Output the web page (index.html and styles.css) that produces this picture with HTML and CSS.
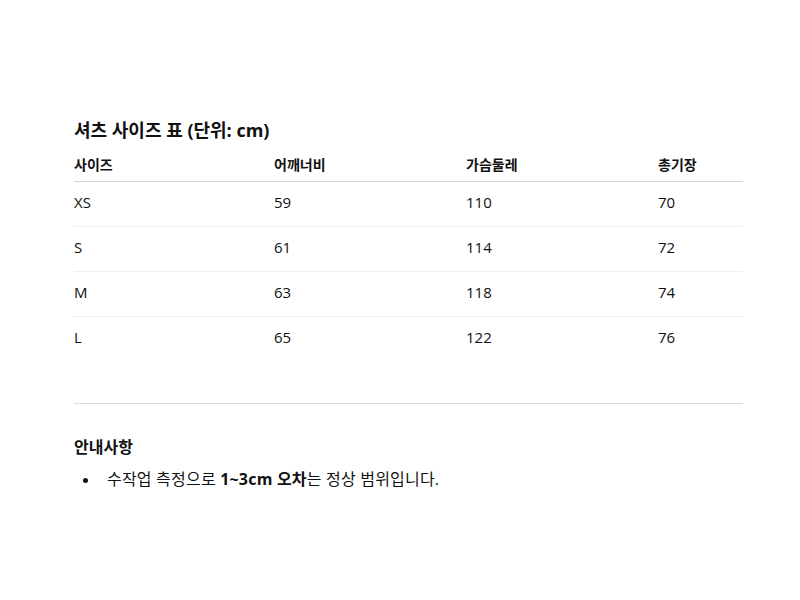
FILE: index.html
```html
<!DOCTYPE html>
<html lang="ko">
<head>
<meta charset="utf-8">
<link rel="stylesheet" href="styles.css">
</head>
<body>
<main class="page">
  <h2 class="title">셔츠 사이즈 표 (단위: cm)</h2>
  <table class="size-table">
    <thead>
      <tr><th class="c1">사이즈</th><th class="c2">어깨너비</th><th class="c3">가슴둘레</th><th class="c4">총기장</th></tr>
    </thead>
    <tbody>
      <tr><td>XS</td><td>59</td><td>110</td><td>70</td></tr>
      <tr><td>S</td><td>61</td><td>114</td><td>72</td></tr>
      <tr><td>M</td><td>63</td><td>118</td><td>74</td></tr>
      <tr><td>L</td><td>65</td><td>122</td><td>76</td></tr>
    </tbody>
  </table>
  <hr class="divider">
  <section class="notice">
    <h3 class="notice-title">안내사항</h3>
    <ul class="notice-list">
      <li><span class="bullet"></span><span class="text">수작업 측정으로 <strong>1~3cm 오차</strong>는 정상 범위입니다.</span></li>
    </ul>
  </section>
</main>
</body>
</html>
```

FILE: styles.css
```css
* { box-sizing: border-box; }
html, body { margin: 0; padding: 0; background: #fff; }
body {
  font-family: "Open Sans", "Noto Sans CJK KR", sans-serif;
  color: #111;
}
.page {
  width: 669px;
  margin-left: 74px;
  padding-top: 116px;
}
.title {
  margin: 0 0 7px 0;
  font-size: 18px;
  line-height: 28px;
  font-weight: 700;
}
.size-table {
  width: 100%;
  border-collapse: collapse;
  font-size: 15px;
}
.size-table th {
  text-align: left;
  font-size: 14px;
  font-weight: 700;
  line-height: 20px;
  padding: 4px 0 6px 0;
  border-bottom: 1px solid #d6d6d6;
}
.size-table td {
  line-height: 20px;
  padding: 10px 0 14px 0;
  border-bottom: 1px solid #efefef;
}
.size-table tbody tr:last-child td { border-bottom: none; }
.c1 { width: 200px; }
.c2 { width: 192px; }
.c3 { width: 192px; }
.c4 { width: 85px; }
.divider {
  margin: 42px 0 0 0;
  border: 0;
  border-top: 1px solid #dcdcdc;
}
.notice { padding-top: 31px; }
.notice-title {
  margin: 0 0 8px 0;
  font-size: 16px;
  line-height: 24px;
  font-weight: 700;
}
.notice-list {
  margin: 0;
  padding-left: 9px;
  list-style: none;
  font-size: 16px;
  line-height: 24px;
}
.notice-list li {
  display: flex;
  align-items: center;
}
.bullet {
  width: 5px;
  height: 5px;
  border-radius: 50%;
  background: #111;
  margin: 2px 19px 0 0;
  flex: 0 0 5px;
}
.text { letter-spacing: 0.2px; }
.notice-list strong { font-weight: 700; }
```
